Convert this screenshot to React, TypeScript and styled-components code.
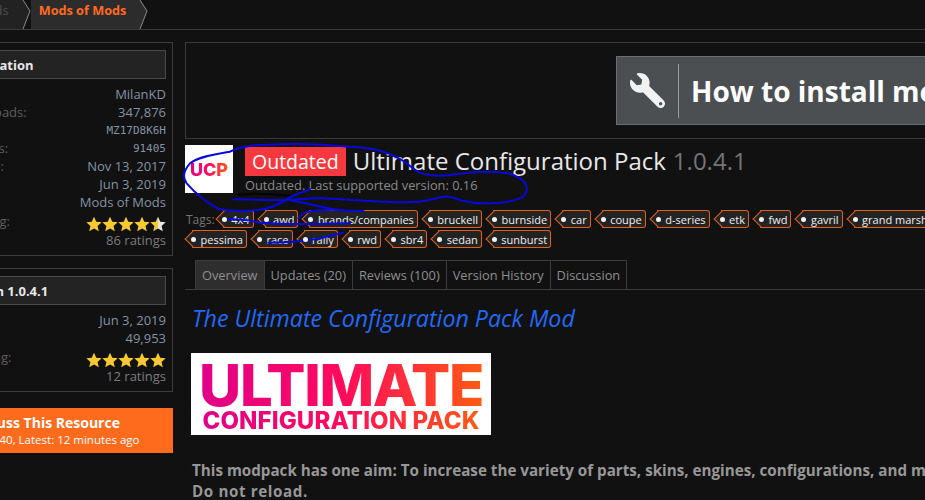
import React from "react";
import styled, { createGlobalStyle } from "styled-components";
import { FaWrench } from "react-icons/fa";

const GlobalStyle = createGlobalStyle`
  html, body {
    margin: 0;
    background: #111;
    font-family: "Open Sans", "Liberation Sans", sans-serif;
  }
`;

const Page = styled.div`
  position: relative;
  width: 925px;
  height: 500px;
  overflow: hidden;
  background: #111;
`;

const Breadcrumbs = styled.nav`
  display: flex;
  height: 30px;
  box-sizing: border-box;
  margin-left: -33px;
  width: 958px;
  border-bottom: 1px solid #3a3a3a;
`;

const Crumb = styled.a<{ $current?: boolean }>`
  display: flex;
  align-items: center;
  padding: 0 13px 9px 8px;
  background: ${(p) => (p.$current ? "#2c2c2c" : "#222")};
  color: ${(p) => (p.$current ? "#ff6a1f" : "#4c4c4c")};
  font-size: ${(p) => (p.$current ? "12.7px" : "13px")};
  font-weight: ${(p) => (p.$current ? 700 : 400)};
`;

const Chevron = ({ fill }: { fill: string }) => (
  <svg width="9" height="29" viewBox="0 0 9 29" style={{ display: "block" }}>
    <polygon points="0,0 1,0 8,11 1,29 0,29" fill={fill} />
    <polyline points="1,0 8,11 1,29" fill="none" stroke="#8a8a8a" strokeWidth="1" />
  </svg>
);

const Columns = styled.div`
  display: flex;
  align-items: flex-start;
  gap: 12px;
  margin-left: -85px;
  padding-top: 12px;
`;

const Sidebar = styled.aside`
  flex: none;
  width: 258px;
  display: flex;
  flex-direction: column;
  gap: 12px;
`;

const Block = styled.section`
  border: 1px solid #3c3c3c;
  padding: 7px 6px 6px;
`;

const BlockHeader = styled.h3`
  margin: 0 0 6px;
  height: 29px;
  box-sizing: border-box;
  display: flex;
  align-items: center;
  border: 1px solid #4a4a4a;
  background: #232323;
  color: #e8e8e8;
  font-size: 13px;
  font-weight: 700;
`;

const InfoRow = styled.div`
  display: flex;
  justify-content: space-between;
  align-items: center;
  height: 18px;
  font-size: 13px;
`;

const InfoLabel = styled.span`
  color: #5f5f5f;
`;

const RatingLabel = styled(InfoLabel)`
  margin-top: -4px;
`;

const InfoValue = styled.span<{ $mono?: boolean }>`
  color: #8493a3;
  font-family: ${(p) => (p.$mono ? '"DejaVu Sans Mono", monospace' : "inherit")};
  font-size: ${(p) => (p.$mono ? "11px" : "13px")};
`;

const RatingRow = styled.div`
  display: flex;
  justify-content: space-between;
  padding-top: 5px;
  font-size: 13px;
`;

const RatingBox = styled.div`
  display: flex;
  flex-direction: column;
  align-items: flex-end;
`;

const Stars = styled.div`
  display: flex;
  height: 15px;
`;

const RatingCount = styled.span`
  color: #7b7b7b;
  line-height: 18px;
`;

const Star = ({ half }: { half?: boolean }) => (
  <svg width="16" height="16" viewBox="0 0 24 24">
    <defs>
      <linearGradient id="halfStar">
        <stop offset="50%" stopColor="#f4c933" />
        <stop offset="50%" stopColor="#e6e6e6" />
      </linearGradient>
    </defs>
    <polygon
      points="12,1 15.4,8.6 23.5,9.4 17.4,14.9 19.2,23 12,18.8 4.8,23 6.6,14.9 0.5,9.4 8.6,8.6"
      fill={half ? "url(#halfStar)" : "#f4c933"}
    />
  </svg>
);

const DiscussButton = styled.a`
  display: block;
  height: 45px;
  margin-top: 4px;
  padding-top: 6px;
  box-sizing: border-box;
  background: #ff6b1c;
  color: #fff;
  text-align: center;
`;

const DiscussTitle = styled.div`
  font-size: 14px;
  font-weight: 700;
  line-height: 18px;
`;

const DiscussMeta = styled.div`
  font-size: 11.5px;
  line-height: 15px;
`;

const Main = styled.main`
  flex: none;
  width: 840px;
`;

const BannerBox = styled.div`
  display: flex;
  height: 97px;
  box-sizing: border-box;
  padding: 13px 0 0 430px;
  border: 1px solid #3a3a3a;
  border-right: 0;
`;

const Banner = styled.div`
  display: flex;
  align-items: center;
  width: 400px;
  height: 69px;
  box-sizing: border-box;
  border: 1px solid #6b6f72;
  background: #4b4f52;
  color: #fff;
  font-size: 28px;
  font-weight: 700;
  white-space: nowrap;
`;

const BannerIcon = styled.div`
  display: flex;
  align-items: center;
  justify-content: center;
  width: 61px;
  height: 54px;
  border-right: 1px solid #9a9da0;
  margin-right: 12px;
  color: #f2f2f2;
  svg {
    transform: scaleX(-1);
  }
`;

const TitleRow = styled.div`
  display: flex;
  gap: 12px;
  margin-top: 6px;
`;

const LogoTile = styled.div`
  flex: none;
  width: 48px;
  height: 48px;
  display: flex;
  align-items: center;
  justify-content: center;
  background: #fff;
  font-family: Inter, sans-serif;
  font-weight: 800;
  font-size: 18px;
`;

const GradientText = styled.span`
  background: linear-gradient(90deg, #e0008a, #ff0a5c 50%, #ff5a14);
  -webkit-background-clip: text;
  background-clip: text;
  color: transparent;
`;

const TitleBlock = styled.div`
  min-width: 0;
`;

const Title = styled.h1`
  display: flex;
  align-items: flex-start;
  margin: 2px 0 0;
  height: 29px;
  font-size: 24px;
  line-height: 27px;
  font-weight: 400;
  color: #e8e8e8;
  white-space: nowrap;
`;

const StatusBadge = styled.span`
  height: 29px;
  padding: 0 7px;
  margin-right: 7px;
  background: #f5393f;
  color: #fff;
  font-size: 19.5px;
  line-height: 29px;
`;

const Version = styled.span`
  margin-left: 7px;
  color: #757575;
`;

const Subtitle = styled.div`
  font-size: 12.8px;
  line-height: 18px;
  color: #8a8a8a;
`;

const TagList = styled.div`
  display: flex;
  flex-wrap: wrap;
  align-items: center;
  gap: 2px 4px;
  width: 770px;
  margin-top: 16px;
`;

const TagsLabel = styled.span`
  margin: 0 -3px 0 1px;
  font-size: 12px;
  color: #757575;
`;

const Tag = styled.a`
  position: relative;
  display: inline-flex;
  align-items: center;
  height: 18px;
  box-sizing: border-box;
  margin-left: 7px;
  padding-right: 3px;
  border: 1px solid #e0601c;
  border-left: 0;
  border-radius: 0 3px 3px 0;
  background: #232323;
  color: #f0f0f0;
  font-size: 11px;
  &::before {
    content: "";
    position: absolute;
    left: -5px;
    top: 2px;
    width: 12px;
    height: 12px;
    box-sizing: border-box;
    border-left: 1px solid #e0601c;
    border-bottom: 1px solid #e0601c;
    background: #232323;
    transform: rotate(45deg);
  }
`;

const TagDot = styled.i`
  position: relative;
  z-index: 1;
  width: 5px;
  height: 5px;
  margin: 0 4.5px 0 -1px;
  border-radius: 50%;
  background: #f2f2f2;
`;

const TagText = styled.span`
  position: relative;
`;

const Tabs = styled.div`
  display: flex;
  margin-top: 12px;
  padding-left: 10px;
  border-bottom: 1px solid #3c3c3c;
`;

const TabItem = styled.a<{ $active?: boolean }>`
  height: 29px;
  box-sizing: border-box;
  padding: 0 6px;
  border: 1px solid #3c3c3c;
  border-left-width: ${(p) => (p.$active ? "1px" : "0")};
  border-bottom: 0;
  background: ${(p) => (p.$active ? "#2e2e2e" : "transparent")};
  color: #8f8f8f;
  font-size: 12.8px;
  line-height: 29px;
`;

const Description = styled.article`
  padding: 13px 0 0 7px;
`;

const Heading = styled.h2`
  margin: 0;
  color: #2269f5;
  font-size: 23.2px;
  font-style: italic;
  font-weight: 400;
  line-height: 30px;
`;

const HeroLogo = styled.div`
  width: 300px;
  height: 82px;
  margin: 20px 0 0 -1px;
  display: flex;
  flex-direction: column;
  align-items: center;
  background: #fff;
  font-family: Inter, sans-serif;
  font-weight: 800;
`;

const HeroTop = styled(GradientText)`
  margin-top: 8px;
  font-size: 58px;
  line-height: 48px;
  letter-spacing: -1.3px;
`;

const HeroBottom = styled(GradientText)`
  font-size: 24px;
  line-height: 24px;
  letter-spacing: 0.1px;
`;

const BodyText = styled.p`
  margin: 25px 0 0 0;
  color: #979797;
  font-size: 15.2px;
  font-weight: 700;
  line-height: 21px;
  white-space: nowrap;
`;

const BodyNote = styled.span`
  letter-spacing: 0.6px;
`;

const Scribble = styled.svg`
  position: absolute;
  left: 180px;
  top: 140px;
  pointer-events: none;
`;

const tags = [
  "4x4", "awd", "brands/companies", "bruckell", "burnside", "car", "coupe", "d-series", "etk", "fwd", "gavril", "grand marshal",
  "pessima", "race", "rally", "rwd", "sbr4", "sedan", "sunburst",
];

const App = () => (
  <Page>
    <GlobalStyle />
    <Breadcrumbs>
      <Crumb>Mods</Crumb>
      <Chevron fill="#222" />
      <Crumb $current>Mods of Mods</Crumb>
      <Chevron fill="#2c2c2c" />
    </Breadcrumbs>
    <Columns>
      <Sidebar>
        <Block>
          <BlockHeader>Mod Information</BlockHeader>
          <InfoRow><InfoLabel>Author:</InfoLabel><InfoValue>MilanKD</InfoValue></InfoRow>
          <InfoRow><InfoLabel>Total Downloads:</InfoLabel><InfoValue>347,876</InfoValue></InfoRow>
          <InfoRow><InfoLabel>Unique ID:</InfoLabel><InfoValue $mono>MZ17D8K6H</InfoValue></InfoRow>
          <InfoRow><InfoLabel>Mod Versions:</InfoLabel><InfoValue $mono>91405</InfoValue></InfoRow>
          <InfoRow><InfoLabel>Release Date:</InfoLabel><InfoValue>Nov 13, 2017</InfoValue></InfoRow>
          <InfoRow><InfoLabel>Last Update:</InfoLabel><InfoValue>Jun 3, 2019</InfoValue></InfoRow>
          <InfoRow><InfoLabel>Category:</InfoLabel><InfoValue>Mods of Mods</InfoValue></InfoRow>
          <RatingRow>
            <RatingLabel>Overall Rating:</RatingLabel>
            <RatingBox>
              <Stars><Star /><Star /><Star /><Star /><Star half /></Stars>
              <RatingCount>86 ratings</RatingCount>
            </RatingBox>
          </RatingRow>
        </Block>
        <Block>
          <BlockHeader>Mod Version 1.0.4.1</BlockHeader>
          <InfoRow><InfoLabel>Released:</InfoLabel><InfoValue>Jun 3, 2019</InfoValue></InfoRow>
          <InfoRow><InfoLabel>Downloads:</InfoLabel><InfoValue>49,953</InfoValue></InfoRow>
          <RatingRow>
            <RatingLabel>Update Rating:</RatingLabel>
            <RatingBox>
              <Stars><Star /><Star /><Star /><Star /><Star /></Stars>
              <RatingCount>12 ratings</RatingCount>
            </RatingBox>
          </RatingRow>
        </Block>
        <DiscussButton>
          <DiscussTitle>Discuss This Resource</DiscussTitle>
          <DiscussMeta>Posts: 1,240, Latest: 12 minutes ago</DiscussMeta>
        </DiscussButton>
      </Sidebar>
      <Main>
        <BannerBox>
          <Banner>
            <BannerIcon><FaWrench size={35} /></BannerIcon>
            How to install mods
          </Banner>
        </BannerBox>
        <TitleRow>
          <LogoTile><GradientText>UCP</GradientText></LogoTile>
          <TitleBlock>
            <Title>
              <StatusBadge>Outdated</StatusBadge>
              Ultimate Configuration Pack
              <Version>1.0.4.1</Version>
            </Title>
            <Subtitle>Outdated. Last supported version: 0.16</Subtitle>
          </TitleBlock>
        </TitleRow>
        <TagList>
          <TagsLabel>Tags:</TagsLabel>
          {tags.map((t) => <Tag key={t}><TagDot /><TagText>{t}</TagText></Tag>)}
        </TagList>
        <Tabs>
          <TabItem $active>Overview</TabItem>
          <TabItem>Updates (20)</TabItem>
          <TabItem>Reviews (100)</TabItem>
          <TabItem>Version History</TabItem>
          <TabItem>Discussion</TabItem>
        </Tabs>
        <Description>
          <Heading>The Ultimate Configuration Pack Mod</Heading>
          <HeroLogo>
            <HeroTop>ULTIMATE</HeroTop>
            <HeroBottom>CONFIGURATION PACK</HeroBottom>
          </HeroLogo>
          <BodyText>
            This modpack has one aim: To increase the variety of parts, skins, engines, configurations, and more.
            <br />
            <BodyNote>Do not reload.</BodyNote>
          </BodyText>
        </Description>
      </Main>
    </Columns>
    <Scribble width="370" height="115" viewBox="0 0 1110 345" fill="none" stroke="#0808dc" strokeWidth="6" strokeLinecap="round" strokeLinejoin="round">
      <path d="M175 164 C220 160 280 162 335 168" stroke="#050505" strokeWidth="7" />
      <path d="M390 148 C375 156 345 160 320 178 C295 195 260 208 225 211 C190 214 150 213 120 208 C90 195 45 160 20 130 C5 110 12 90 30 70 C55 50 110 42 150 35 C170 22 220 15 260 14 C340 10 430 12 510 20 C580 22 640 40 680 70 C700 85 710 95 725 100 C755 110 785 108 810 105 C850 100 880 95 910 95 C950 95 985 98 1000 105 C1025 115 1040 130 1040 145 C1040 160 1035 170 1020 175 C990 187 950 190 910 190 C880 190 860 185 840 180 C820 172 805 168 790 170 C760 176 740 185 710 185 C680 188 650 186 610 185 C580 184 540 180 510 180 C470 176 430 174 400 175 C360 178 330 180 300 180 C250 180 200 178 160 178" />
      <path d="M320 178 C350 185 375 190 400 195 C430 202 455 208 480 210 C505 212 530 213 550 213" />
      <path d="M130 237 C150 238 170 238 190 240 C210 241 225 245 240 248 C280 251 315 252 350 252 C405 252 460 250 510 250" />
      <path d="M355 235 C362 225 370 220 375 218 C395 212 415 211 430 210 C450 209 470 209 490 210" />
      <path d="M265 308 C290 308 315 307 340 305 C370 302 395 300 420 295 C445 288 470 282 490 278" />
    </Scribble>
  </Page>
);

export default App;
